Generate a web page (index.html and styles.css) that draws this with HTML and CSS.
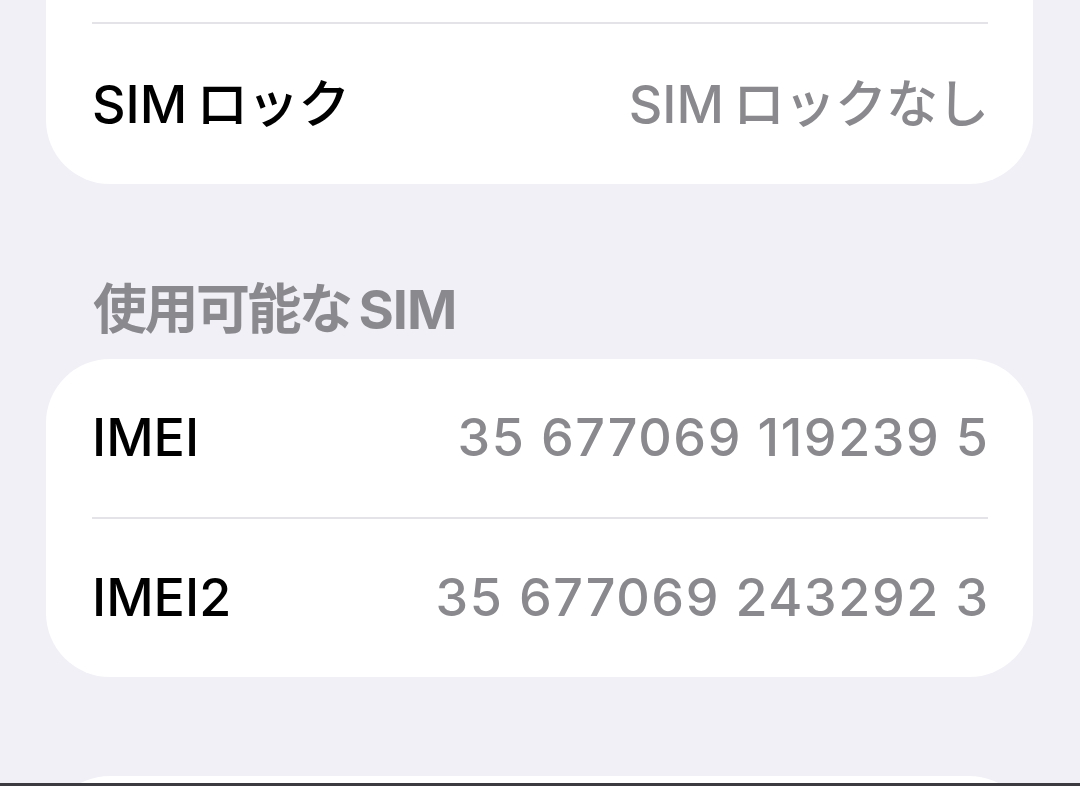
FILE: index.html
```html
<!DOCTYPE html>
<html lang="ja">
<head>
<meta charset="utf-8">
<title>情報</title>
<link rel="stylesheet" href="styles.css">
</head>
<body>
<main class="list">
  <section class="card card-top">
    <div class="row row-spacer"></div>
    <div class="row row-tall">
      <span class="label"><span class="latin">SIM</span><span class="kana">ロック</span></span>
      <span class="value"><span class="latin">SIM</span><span class="kana">ロックなし</span></span>
    </div>
  </section>

  <h2 class="section-header"><span class="kana">使用可能な</span><span class="latin-after">SIM</span></h2>
  <section class="card">
    <div class="row">
      <span class="label">IMEI</span>
      <span class="value value-num">35 677069 119239 5</span>
    </div>
    <div class="row">
      <span class="label">IMEI2</span>
      <span class="value value-num">35 677069 243292 3</span>
    </div>
  </section>

  <section class="card card-next"></section>
</main>
<div class="screen-edge"></div>
</body>
</html>
```

FILE: styles.css
```css
html, body {
  margin: 0;
  padding: 0;
  height: 100%;
  overflow: hidden;
}

body {
  background: #f1f0f6;
  font-family: "Inter", "Noto Sans CJK JP", sans-serif;
  color: #000;
}

.list {
  display: flex;
  flex-direction: column;
  padding: 0 47px 0 46px;
}

.card {
  background: #fff;
  border-radius: 64px;
  display: flex;
  flex-direction: column;
}

.card-top {
  margin-top: -120px;
}

.row {
  display: flex;
  align-items: center;
  justify-content: space-between;
  height: 158px;
  margin: 0 45px 0 46px;
  font-size: 52px;
  font-weight: 500;
  line-height: 1;
}

.row + .row {
  border-top: 2px solid #e4e4e8;
}

.row-spacer {
  height: 142px;
}

.row-tall {
  height: 159px;
  padding-top: 1px;
}

.label {
  color: #000;
}

.value {
  color: #8a8a8e;
}

/* small gap between Latin and kana runs */
.latin {
  margin-right: 9px;
}

.kana {
  letter-spacing: -1px;
}

.latin-after {
  margin-left: 8px;
}

.value-num {
  letter-spacing: 1.6px;
  margin-right: -1.6px;
}

.section-header {
  margin: 96px 0 19px;
  padding: 0 47px;
  font-size: 54px;
  line-height: 60px;
  font-weight: 700;
  color: #8a8a8e;
}

.section-header .kana {
  letter-spacing: -2.5px;
}

.section-header .latin-after {
  letter-spacing: -1px;
}

.card-next {
  margin-top: 99px;
  height: 200px;
}

.screen-edge {
  position: fixed;
  left: 0;
  right: 0;
  bottom: 0;
  height: 3px;
  background: #3c3c40;
}
```
